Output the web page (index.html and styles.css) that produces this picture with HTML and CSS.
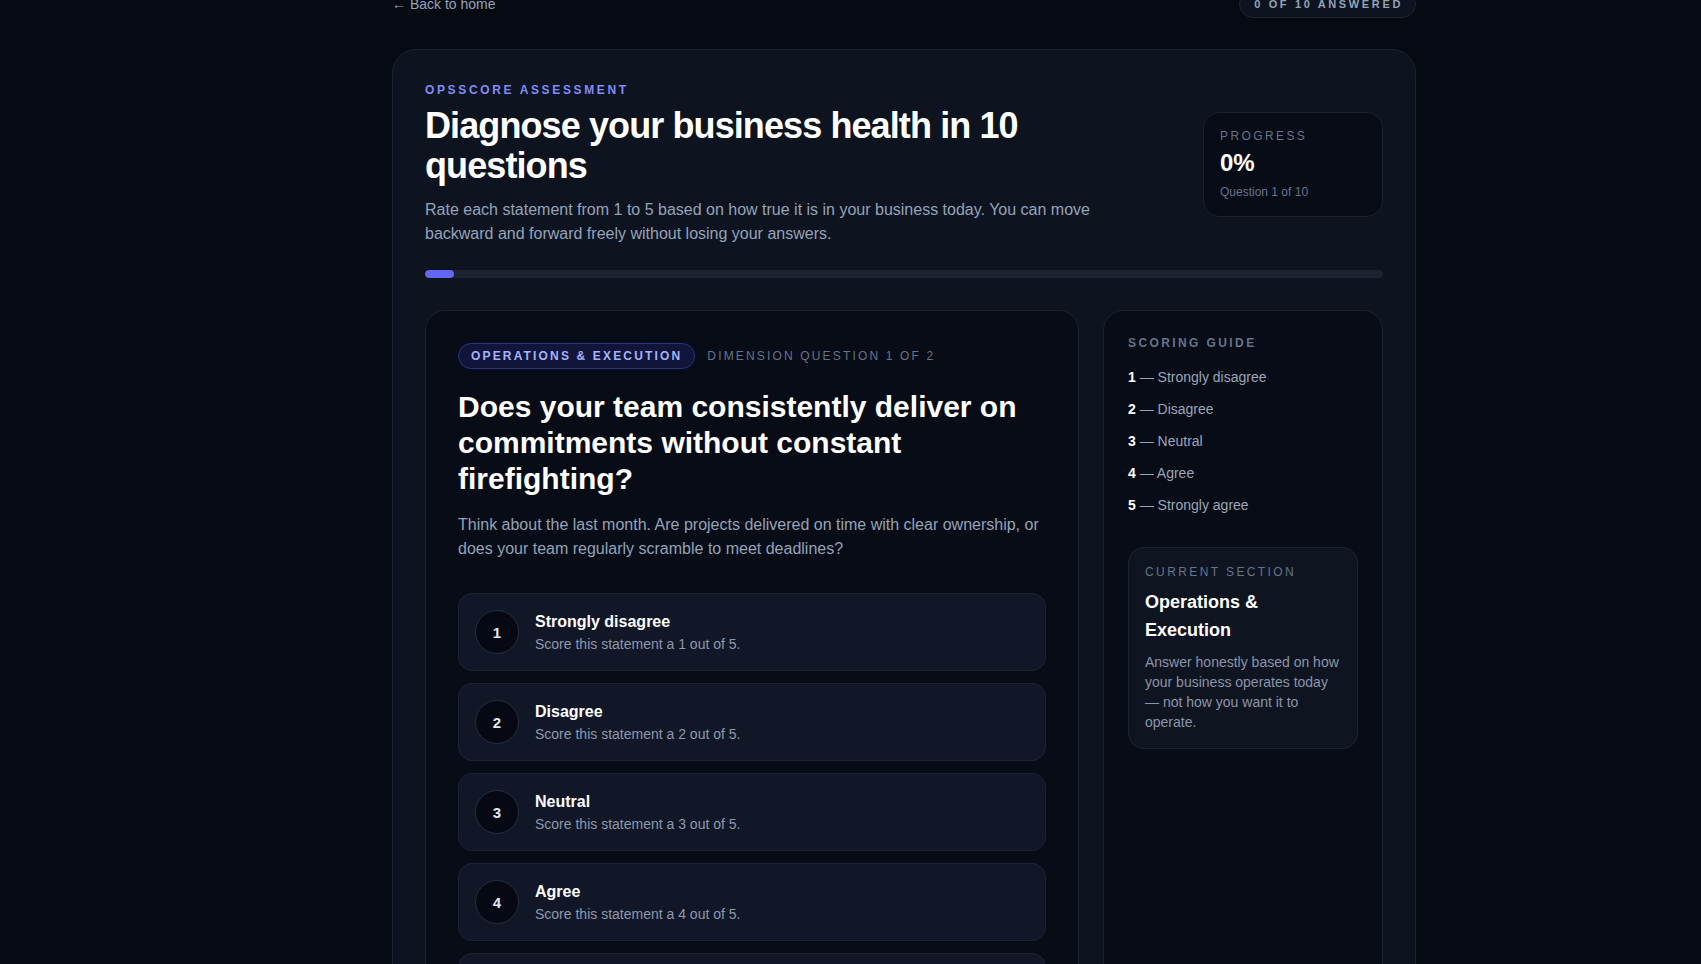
FILE: index.html
```html
<!DOCTYPE html>
<html lang="en">
<head>
<meta charset="utf-8">
<title>OpsScore Assessment</title>
<link rel="stylesheet" href="styles.css">
</head>
<body>
<div class="page">
  <header class="topbar">
    <a class="back" href="#">← Back to home</a>
    <span class="answered">0 of 10 answered</span>
  </header>

  <main class="shell">
    <div class="intro">
      <div class="intro-text">
        <p class="eyebrow">OpsScore Assessment</p>
        <h1 class="title">Diagnose your business health in 10 questions</h1>
        <p class="lead">Rate each statement from 1 to 5 based on how true it is in your business today. You can move backward and forward freely without losing your answers.</p>
      </div>
      <div class="progress-box">
        <p class="pb-label">Progress</p>
        <p class="pb-value">0%</p>
        <p class="pb-sub">Question 1 of 10</p>
      </div>
    </div>

    <div class="track"><div class="fill" style="width:3%"></div></div>

    <div class="grid">
      <section class="qcard">
        <div class="qmeta">
          <span class="pill">Operations &amp; Execution</span>
          <span class="dim">Dimension question 1 of 2</span>
        </div>
        <h2 class="question">Does your team consistently deliver on commitments without constant firefighting?</h2>
        <p class="qdesc">Think about the last month. Are projects delivered on time with clear ownership, or does your team regularly scramble to meet deadlines?</p>

        <div class="options">
          <button class="option" type="button">
            <span class="circle">1</span>
            <span class="opt-text"><span class="opt-title">Strongly disagree</span><span class="opt-sub">Score this statement a 1 out of 5.</span></span>
          </button>
          <button class="option" type="button">
            <span class="circle">2</span>
            <span class="opt-text"><span class="opt-title">Disagree</span><span class="opt-sub">Score this statement a 2 out of 5.</span></span>
          </button>
          <button class="option" type="button">
            <span class="circle">3</span>
            <span class="opt-text"><span class="opt-title">Neutral</span><span class="opt-sub">Score this statement a 3 out of 5.</span></span>
          </button>
          <button class="option" type="button">
            <span class="circle">4</span>
            <span class="opt-text"><span class="opt-title">Agree</span><span class="opt-sub">Score this statement a 4 out of 5.</span></span>
          </button>
          <button class="option" type="button">
            <span class="circle">5</span>
            <span class="opt-text"><span class="opt-title">Strongly agree</span><span class="opt-sub">Score this statement a 5 out of 5.</span></span>
          </button>
        </div>

        <div class="nav">
          <button class="btn btn-ghost" type="button">Previous</button>
          <button class="btn btn-primary" type="button">Next question</button>
        </div>
      </section>

      <aside class="side">
        <p class="side-label">Scoring guide</p>
        <ul class="guide">
          <li><b>1</b> — Strongly disagree</li>
          <li><b>2</b> — Disagree</li>
          <li><b>3</b> — Neutral</li>
          <li><b>4</b> — Agree</li>
          <li><b>5</b> — Strongly agree</li>
        </ul>
        <div class="current">
          <p class="cur-label">Current section</p>
          <p class="cur-title">Operations &amp; Execution</p>
          <p class="cur-desc">Answer honestly based on how your business operates today — not how you want it to operate.</p>
        </div>
      </aside>
    </div>
  </main>
</div>
</body>
</html>
```

FILE: styles.css
```css
* { box-sizing: border-box; }

html, body {
  margin: 0;
  padding: 0;
  background: #060a13;
  font-family: "Liberation Sans", Arial, sans-serif;
  color: #f8fafc;
}

p { margin: 0; }

.page {
  width: 1024px;
  margin: -10px 0 0 392px;
  padding-bottom: 40px;
}

.topbar {
  height: 28px;
  display: flex;
  align-items: center;
  justify-content: space-between;
}

.back {
  color: #94a3b8;
  font-size: 14px;
  line-height: 20px;
  text-decoration: none;
}

.answered {
  height: 28px;
  padding: 0 12px 0 14px;
  border: 1px solid #1e2536;
  border-radius: 999px;
  background: #0e1320;
  color: #94a3b8;
  font-size: 11px;
  line-height: 26px;
  font-weight: 700;
  letter-spacing: 0.24em;
  text-transform: uppercase;
}

.shell {
  margin-top: 31px;
  border: 1px solid #1c2333;
  border-radius: 24px;
  background: #0e1320;
  padding: 32px;
}

.intro {
  display: flex;
  align-items: center;
  justify-content: space-between;
  gap: 32px;
}

.intro-text { max-width: 672px; }

.eyebrow {
  color: #818cf8;
  font-size: 12px;
  line-height: 16px;
  font-weight: 700;
  letter-spacing: 0.22em;
  text-transform: uppercase;
}

.title {
  margin: 8px 0 0;
  font-size: 36px;
  line-height: 40px;
  font-weight: 700;
  letter-spacing: -0.025em;
  color: #ffffff;
}

.lead {
  margin-top: 12px;
  color: #94a3b8;
  font-size: 16px;
  line-height: 24px;
}

.progress-box {
  width: 180px;
  flex-shrink: 0;
  border: 1px solid #1a2131;
  border-radius: 16px;
  background: #080c17;
  padding: 15px 16px 16px;
}

.pb-label {
  color: #64748b;
  font-size: 12px;
  line-height: 16px;
  letter-spacing: 0.2em;
  text-transform: uppercase;
}

.pb-value {
  margin-top: 5px;
  font-size: 24px;
  line-height: 28px;
  font-weight: 700;
  color: #ffffff;
}

.pb-sub {
  margin-top: 7px;
  color: #64748b;
  font-size: 12px;
  line-height: 16px;
}

.track {
  margin-top: 24px;
  height: 8px;
  border-radius: 999px;
  background: #1c2230;
  overflow: hidden;
}

.fill {
  height: 100%;
  border-radius: 999px;
  background: #6366f1;
}

.grid {
  margin-top: 32px;
  display: grid;
  grid-template-columns: 1fr 280px;
  gap: 24px;
}

.qcard {
  border: 1px solid #1a2131;
  border-radius: 20px;
  background: #080c17;
  padding: 32px;
}

.qmeta {
  display: flex;
  align-items: center;
  gap: 12px;
}

.pill {
  padding: 4px 12px;
  border: 1px solid #2d3282;
  border-radius: 999px;
  background: #11153a;
  color: #a5b4fc;
  font-size: 12px;
  line-height: 16px;
  font-weight: 700;
  letter-spacing: 0.18em;
  text-transform: uppercase;
}

.dim {
  color: #64748b;
  font-size: 12px;
  line-height: 16px;
  letter-spacing: 0.18em;
  text-transform: uppercase;
}

.question {
  margin: 20px 0 0;
  font-size: 30px;
  line-height: 36px;
  font-weight: 700;
  color: #ffffff;
}

.qdesc {
  margin-top: 16px;
  color: #94a3b8;
  font-size: 16px;
  line-height: 24px;
}

.options {
  margin-top: 32px;
  display: flex;
  flex-direction: column;
  gap: 12px;
}

.option {
  display: flex;
  align-items: center;
  gap: 16px;
  width: 100%;
  padding: 16px;
  border: 1px solid #1c2434;
  border-radius: 14px;
  background: #111726;
  font-family: inherit;
  text-align: left;
  cursor: pointer;
}

.circle {
  width: 44px;
  height: 44px;
  flex-shrink: 0;
  display: flex;
  align-items: center;
  justify-content: center;
  border: 1px solid #252d40;
  border-radius: 50%;
  background: #060913;
  color: #e2e8f0;
  font-size: 15px;
  font-weight: 700;
}

.opt-text {
  display: flex;
  flex-direction: column;
  gap: 2px;
  padding-top: 2px;
}

.opt-title {
  color: #ffffff;
  font-size: 16px;
  line-height: 20px;
  font-weight: 700;
}

.opt-sub {
  color: #8e99ad;
  font-size: 14px;
  line-height: 20px;
}

.nav {
  margin-top: 32px;
  display: flex;
  justify-content: space-between;
}

.btn {
  padding: 12px 20px;
  border-radius: 12px;
  font-family: inherit;
  font-size: 14px;
  font-weight: 700;
}

.btn-ghost {
  border: 1px solid #1c2434;
  background: transparent;
  color: #94a3b8;
}

.btn-primary {
  border: 1px solid #6366f1;
  background: #6366f1;
  color: #ffffff;
}

.side {
  border: 1px solid #1a2131;
  border-radius: 20px;
  background: #080c17;
  padding: 24px;
}

.side-label {
  color: #64748b;
  font-size: 12px;
  line-height: 16px;
  font-weight: 700;
  letter-spacing: 0.2em;
  text-transform: uppercase;
}

.guide {
  list-style: none;
  margin: 16px 0 0;
  padding: 0;
  display: flex;
  flex-direction: column;
  gap: 12px;
  color: #9aa5b8;
  font-size: 14px;
  line-height: 20px;
}

.guide b { color: #ffffff; }

.current {
  margin-top: 32px;
  border: 1px solid #1c2434;
  border-radius: 16px;
  background: #0f1421;
  padding: 16px;
}

.cur-label {
  color: #64748b;
  font-size: 12px;
  line-height: 16px;
  letter-spacing: 0.2em;
  text-transform: uppercase;
}

.cur-title {
  margin-top: 8px;
  color: #ffffff;
  font-size: 18px;
  line-height: 28px;
  font-weight: 700;
}

.cur-desc {
  margin-top: 8px;
  color: #8b95a9;
  font-size: 14px;
  line-height: 20px;
}
```
